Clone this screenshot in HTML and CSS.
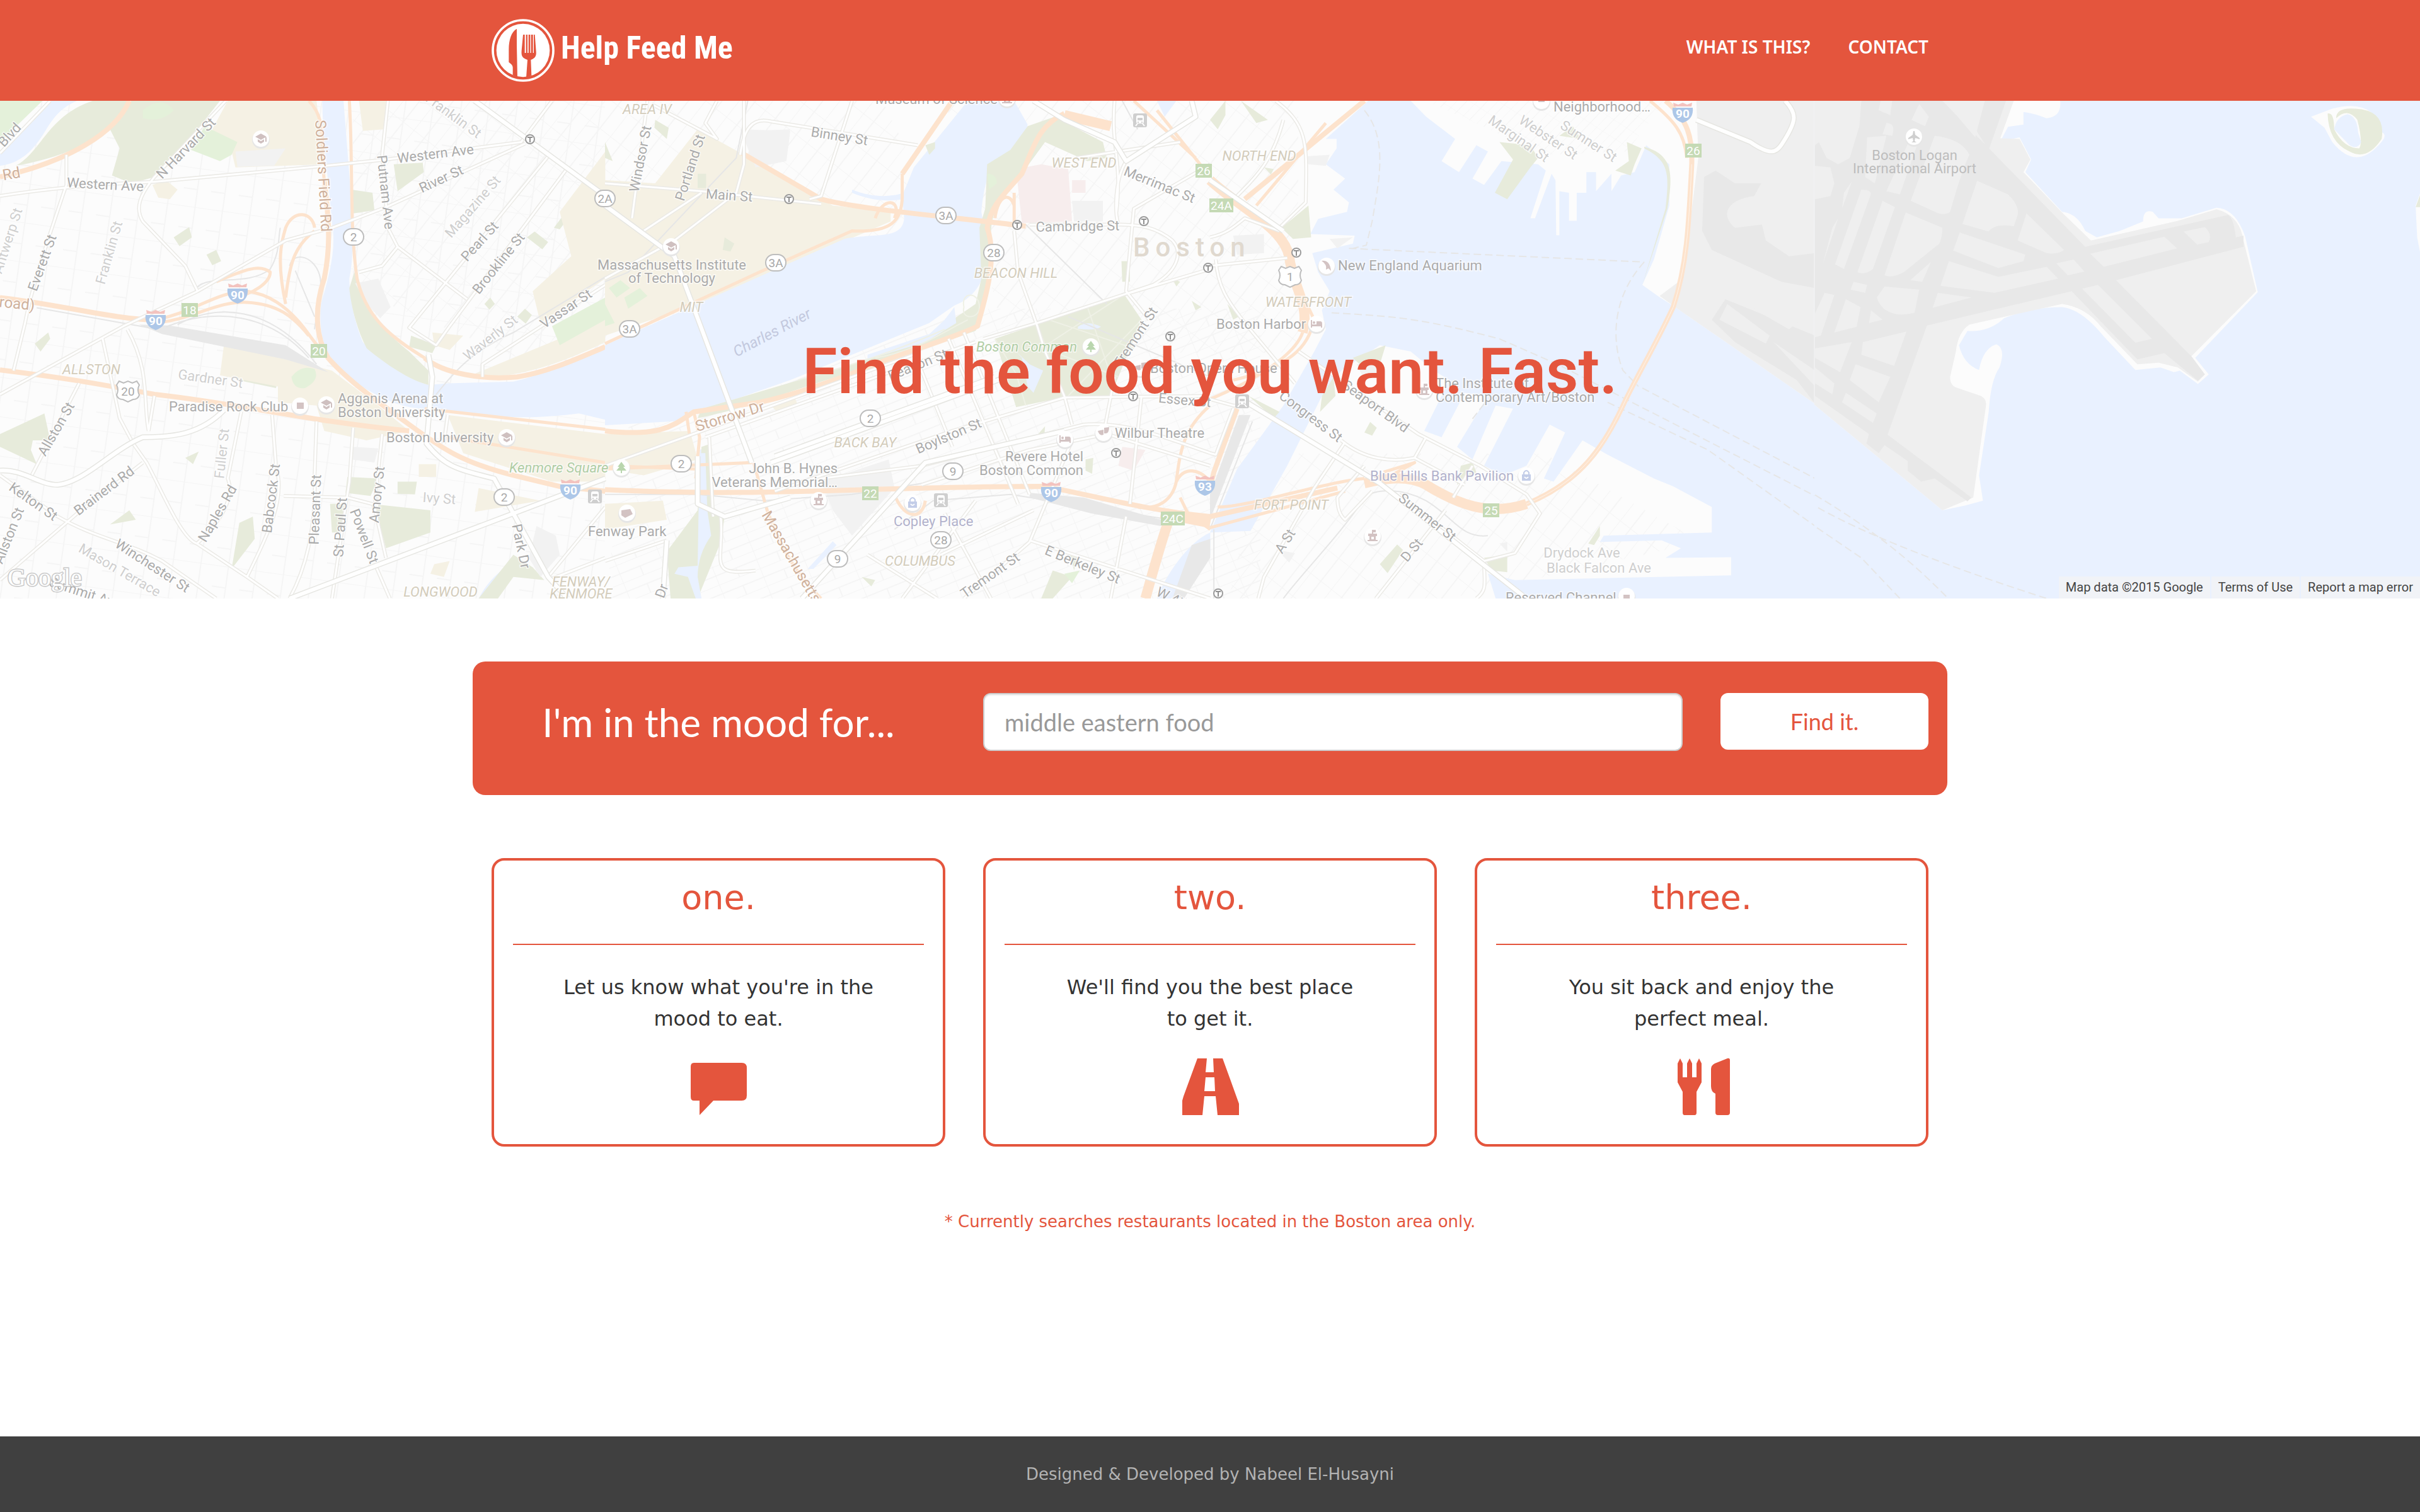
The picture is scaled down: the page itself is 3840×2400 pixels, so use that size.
FILE: index.html
```html
<!DOCTYPE html>
<html lang="en">
<head>
<meta charset="utf-8">
<meta name="viewport" content="width=device-width, initial-scale=1">
<title>Help Feed Me</title>
<link rel="stylesheet" href="styles.css">
</head>
<body>
<header class="site-header">
  <div class="container header-inner">
    <a class="brand" href="#">
      <svg class="brand-mark" viewBox="60 90 300 300" aria-hidden="true">
        <circle cx="210" cy="240" r="144" fill="none" stroke="#fff" stroke-width="11"/>
        <circle cx="210" cy="240" r="127" fill="#fff"/>
        <path fill="#e4553d" d="M179 138C155 150 142 190 142 235V296C150 303 161 308 161 322V357L183 368 180 216V138ZM210 165 203 240C201 266 205 276 231 285L225 368 250 360 247 285C268 277 274 266 272 245L266 165H261V252H257V165H248V252H244V165H236V252H231V165H224V252H218V165Z"/>
      </svg>
      <span class="brand-name">Help Feed Me</span>
    </a>
    <nav class="site-nav">
      <a href="#about">What is this?</a>
      <a href="#contact">Contact</a>
    </nav>
  </div>
</header>

<section class="hero">
  <svg class="map" viewBox="0 0 3840 790" preserveAspectRatio="xMidYMid slice" role="img" aria-label="Map of Boston">
    <defs>
      <pattern id="grid-a" width="44" height="62" patternUnits="userSpaceOnUse" patternTransform="rotate(8)"><path class="street" d="M0 0H44M22 0V62M0 34H22"/></pattern>
      <pattern id="grid-b" width="70" height="30" patternUnits="userSpaceOnUse" patternTransform="rotate(-22)"><path class="street" d="M0 0H70M0 0V30M35 15V30M0 15H70"/></pattern>
      <pattern id="grid-c" width="42" height="46" patternUnits="userSpaceOnUse" patternTransform="rotate(38)"><path class="street" d="M0 0H42M0 0V46M21 0V46"/></pattern>
      <g id="t"><circle r="7" fill="#fff" stroke="#9b9b9b" stroke-width="2"/><path d="M-4-3H4M0-3V5" stroke="#8f8f8f" stroke-width="2"/></g>
      <g id="pin"><circle cy="2" r="14" fill="#e6e6e6"/><circle r="13" fill="#fff"/></g>
      <g id="school"><use href="#pin"/><path fill="#cfc0c0" d="M-9-3 0-8 9-3 0 2ZM-5 1 0 4 5 1V5L0 8-5 5ZM7-2H9V5H7Z"/></g>
      <g id="tree"><use href="#pin"/><path fill="#b9d6ae" d="M0-9 6-1H3L8 5H1V9H-1V5H-8L-3-1H-6Z"/></g>
      <g id="hotel"><use href="#pin"/><path fill="#d3c3c3" d="M-9-6H-7V1H0V-4H6Q9-4 9 0V6H7V4H-7V6H-9Z"/><circle cx="-4" cy="-2" r="2" fill="#d3c3c3"/></g>
      <g id="civic"><use href="#pin"/><path fill="#d3c3c3" d="M-1-10H5V-6H1V-4H7V0H5V6H8V8H-8V6H-5V0H-7V-4H-1ZM-2 1V5H2V1Z"/></g>
      <g id="shop"><use href="#pin"/><path fill="#c3cde8" d="M-7-2H7V8H-7Z"/><path fill="none" stroke="#c3cde8" stroke-width="2" d="M-4-2V-5Q0-11 4-5V-2"/><path fill="none" stroke="#fff" stroke-width="2" d="M-3 2Q0 6 3 2"/></g>
      <g id="masks"><use href="#pin"/><path fill="#d3c3c3" d="M-9-3 0-5V3Q-6 6-9-3ZM1-8 9-9Q9 1 3 1H1Z"/></g>
      <g id="train"><rect x="-11" y="-11" width="22" height="22" rx="3" fill="#cfcfcf"/><rect x="-6" y="-8" width="12" height="13" rx="3" fill="#fff"/><path fill="#cfcfcf" d="M-4-4H4V0H-4ZM-4 2H-2V4H-4ZM2 2H4V4H2Z"/><path d="M-4 5-7 9M4 5 7 9" stroke="#fff" stroke-width="2"/></g>
      <g id="route"><rect x="-16" y="-13" width="32" height="26" rx="13" fill="#fff" stroke="#bdbdbd" stroke-width="2"/></g>
      <g id="us"><path fill="#fff" stroke="#bdbdbd" stroke-width="2" d="M-14-16-7-13 0-16 7-13 14-16 18-10Q14-2 18 6 16 13 8 13L0 17-8 13Q-16 13-18 6-14-2-18-10Z"/></g>
      <g id="interstate"><path fill="#f3c3bf" d="M-15-16-7-13 0-16 7-13 15-16 14-10H-14Z"/><path fill="#adc7e8" d="M-16-8H16Q18 10 0 16-18 10-16-8Z"/></g>
      <g id="exit"><rect x="-13" y="-11" width="26" height="22" fill="#c5dab5"/></g>
      <!-- Road centre lines, stroked twice: casing first, then surface -->
      <path id="r1" class="line" d="M130 0 0 165M585 0 400 240C360 300 350 340 370 380L480 520 512 600M0 300C150 270 300 260 400 255L800 210 1000 185 1350 130 1430 0M172 170V265C120 450 80 600 65 700L35 850M0 925 320 710 512 600 740 440 860 400 1000 335 1360 135M1005 0 990 170 1005 400 1030 460 1210 625M1030 460 990 520 930 540M1420 175 1060 715 1130 770 1165 710 1465 220M1568 580 1250 830V870M265 745 310 1000 345 1080 380 1140C420 1230 470 1380 510 1395L640 1500 720 1568M330 720C390 850 370 950 385 1040M400 930 385 1040M205 890 80 1185M0 1180 150 1310C250 1380 330 1390 420 1450L560 1568M0 1510 200 1300 370 1140M625 980 590 1190C610 1250 570 1330 510 1395M705 990 715 1150C740 1250 700 1350 640 1500M820 1010 815 1180C820 1350 790 1480 750 1568M915 1030 905 1200 860 1568M990 1050 970 1280 1000 1440M735 1245 900 1250 980 1275M1568 1440 1420 1510M1568 1280 1420 1500M975 1470 1010 1568M1160 990 1150 1080"/>
      <path id="r1b" class="line" d="M1230 0 1568 300M0 1165C60 1160 100 1210 150 1210 220 1200 290 1100 370 1060 450 1060 520 1050 580 975M1110 800 1120 870 1105 1080C1150 1150 1180 1160 1280 1190L1330 1300M750 1568 1330 1300 1568 1190M1330 1300 1420 1500 1470 1568"/>
      <path id="r2" class="line" d="M360 0V200L340 290 180 440 0 560M120 10 290 120 260 70 290 0M110 0 70 370M0 260 250 285 560 325M250 290 100 410M350 170C360 90 380 50 430 65L810 140M640 0 560 300 530 310M1060 410 1070 540 1120 710 1140 790 1190 930 1210 1020M980 750 1120 700 1420 580C1480 540 1500 480 1470 440 1430 400 1390 390 1330 390H1100M1320 0C1310 150 1340 180 1325 350M1350 190C1320 250 1320 350 1330 390M1568 200 1370 340 1350 600 1410 690M1360 605 1568 530M890 750 1070 1270M930 730 1100 1240M800 790 900 1090M800 800 0 1150M960 760 260 1060M1568 930 1190 935 900 1040 440 1230M1568 1110C1450 1060 1350 1010 1240 1020L820 1150 560 1190M1568 1150 1300 1050 1100 1100 820 1210M280 1310 270 1060M300 1310C310 1450 260 1500 390 1480M160 1385 0 1450M1100 1390 1210 1070M870 1430 1110 1290M1320 870 1290 1060M1390 930 1360 1270M1100 1385 1568 1568M1100 1390 930 1568M680 1430 860 1568M960 1260 770 1568M1350 1310 1310 1568M880 1300 1000 1568M1220 180 1490 130"/>
      <path id="r2b" class="line" d="M0 330 180 490 380 1140M1110 0 1190 60 1320 130 1350 190 1530 50 1520 0M240 1120V1270L310 1310 480 1250M440 1120 1010 870M430 1140 1040 870M510 1568 830 1140 1190 1040M160 1385 150 1568"/>
      <path id="r3" class="line" d="M170 0C260 80 250 150 248 320L180 400M190 60C160 200 110 250 70 300M0 520 200 495M0 430C40 420 60 400 90 370L180 410M15 500C20 600 60 650 90 700L220 890M0 940 60 960 100 960M230 790 540 1050 700 1150 820 1240 855 1300 790 1425 710 1450M340 1070C400 1130 470 1140 530 1125L660 1210M560 1060 530 1125M350 1075 270 1220M400 1150 330 1250C330 1290 340 1310 350 1320L420 1230M270 1220 140 1500 125 1568M680 1150 630 1250M610 1290 430 1568M490 1240 710 1450C710 1520 720 1540 690 1568M0 1110 15 1115 60 970"/>
      <path id="r3b" class="line" d="M0 250 190 410M95 950 440 1205 820 1568M1260 60 1400 130C1460 180 1470 160 1490 120 1520 60 1520 40 1490 0"/>
    </defs>
    <rect width="3840" height="790" fill="#fcfcfc"/>
    <rect width="960" height="790" fill="url(#grid-a)"/>
    <path fill="url(#grid-c)" d="M560 0H1400L1500 200 900 440 560 300Z"/>
    <path fill="url(#grid-b)" d="M1000 500 1550 330 2000 330V790H960Z"/>
    <path fill="url(#grid-c)" d="M1500 0H2060V400H1600ZM2000 560H2450L2700 700 2300 790H1950ZM2200 0H2650V120H2400Z"/>

    <g transform="scale(.6125 .5038)" class="geo">
      <path class="water" d="M200 0H130L0 165V205C60 195 90 150 120 90 140 50 160 20 200 0ZM835 0C835 100 850 250 862 400 870 480 850 560 832 640 825 720 835 790 880 850 930 900 1000 950 1060 965 1120 975 1200 985 1250 990 1330 1000 1400 1000 1500 985L1568 1005V780C1500 800 1420 860 1330 885L1160 890 1110 895C1040 870 970 800 940 760 915 690 905 600 905 560 925 450 905 250 890 0ZM1240 1568C1270 1500 1300 1480 1330 1450L1320 1480C1290 1510 1290 1540 1270 1568Z"/>
      <path class="park" d="M240 0H330C300 100 200 170 40 205 110 160 120 50 240 0ZM340 0H570L440 200 400 240 340 260 290 235 310 150 285 90ZM918 540 935 600C960 690 1020 750 1060 790L1110 850V895C1060 880 1000 830 950 780 915 700 905 600 905 590ZM0 1050 115 985 130 1070H85L80 1100 95 1145 0 1090ZM960 1270 1115 1290V1360L1000 1410 985 1340ZM615 830 725 850 715 905 615 880ZM900 1185 980 1190 960 1245 895 1235ZM1030 1200H1080L1075 1240 1030 1238ZM450 430 490 398 497 430 465 458ZM535 485 560 470 573 505 550 518ZM1020 200 1095 195 1098 225 1030 285ZM910 280 965 290 970 345 915 355ZM90 765 125 730 130 750 105 790ZM480 1125 515 1105 500 1145ZM285 1335 335 1290 352 1320ZM620 1330 655 1310 660 1380 600 1475ZM855 1270H890L885 1360H860ZM1365 430 1385 412 1420 445 1405 468ZM1435 400 1475 335 1485 350 1450 405ZM1065 740 1130 770 1120 795 1060 775ZM1240 1568 1330 1430 1380 1470 1410 1510 1330 1500 1290 1568ZM1340 680 1360 655 1378 675 1362 702ZM1255 640 1270 620 1282 640 1268 658Z"/>
      <path class="campus" d="M590 0H820L840 200 610 210 600 160 550 90ZM930 0H1000L995 90 940 95ZM1568 160 1450 350 1480 490 1380 600 1400 700 1568 560ZM1230 860 1568 690V760C1400 860 1300 870 1250 870ZM580 770 760 820 860 850 980 960 1060 1040 950 1070 840 1040 820 960 720 950V900L570 865ZM1160 990 1568 1050V1200H1430L1200 1110ZM1240 1220 1400 1260 1230 1295ZM1085 1145H1130V1185H1085ZM1120 730 1200 740 1165 785 1125 770ZM395 265 430 250 460 280 440 310 410 305ZM1125 1460 1165 1450 1150 1500 1115 1490Z"/>
      <path class="lawn" d="M530 80 615 130 600 170 570 190 495 155ZM1430 710 1568 620V690L1450 770ZM755 870Q780 830 815 845 830 880 790 905 760 910 755 870ZM370 30Q420-20 450 30 420 70 370 55ZM0 0H110L0 130Z"/>
      <path class="block" d="M610 160 740 150 710 205 615 208ZM920 575 980 560 1012 650 985 685 950 640ZM915 1090 980 1095 970 1140 910 1130ZM1390 1340 1440 1370 1450 1430 1400 1500 1370 1440Z"/>
      <path class="rail-yard" d="M360 705 440 708 740 770 850 855 740 815 420 735Z"/>
      <path class="rail" d="M95 652 400 718M460 705C560 640 700 640 820 830M430 712C560 650 700 670 800 810M750 520C760 470 820 490 830 560 835 620 815 700 815 720M765 535 815 680M505 600C520 540 640 590 700 530 725 480 720 440 726 400M1568 555 1330 730C1220 790 1180 850 1120 940"/>
      <path class="highway" d="M335 0C300 100 180 190 0 240M800 0C850 60 830 150 840 250M905 0C915 200 905 400 925 560 950 690 1020 750 1100 810M0 620C150 640 300 690 400 690 500 670 560 600 640 600 700 610 740 650 770 690 800 730 810 760 850 810M400 700C500 690 560 630 640 635 720 640 760 680 800 740M740 640C715 500 730 440 740 400 760 340 810 350 815 400M815 410C760 460 750 520 740 620M560 570C620 540 670 510 700 540 700 570 660 610 600 620M1100 970 1568 1035M1160 1060 1568 1140"/>
      <path class="highway wide" d="M335 0C300 100 180 190 0 240M840 250C855 400 855 470 840 560 815 650 815 740 850 810 900 880 980 950 1060 1020 1150 1100 1200 1140 1330 1180L1450 1215 1568 1230M1100 810C1150 860 1250 880 1340 870 1420 855 1500 810 1568 775M0 848C150 870 250 890 400 925 600 950 800 1010 1060 1040M0 620C150 640 300 690 400 690"/>
      <use href="#r1" class="road-edge"/><use href="#r1" class="road"/>
      <use href="#r1b" class="main-edge"/><use href="#r1b" class="main-road"/>
    </g>

    <g transform="translate(960 0) scale(.6125 .5038)" class="geo">
      <path class="campus" d="M0 250 130 260 240 90 360 170 590 330 740 350V380L240 640 0 740ZM0 1050 220 1040 240 1130 100 1180 0 1160ZM0 1270 150 1260 160 1320 0 1350ZM430 960 490 930 500 960 450 985Z"/>
      <path class="block" d="M380 95 480 90 430 200 370 180ZM560 1200 735 1130 750 1220 640 1370 590 1290ZM1210 315H1290V380H1215ZM350 90 480 95 470 190 390 210Z"/>
      <path class="hospital" d="M1065 215 1130 200 1200 215 1210 380 1080 385ZM1210 250H1245V290H1210ZM1340 1090 1400 1100 1370 1165 1330 1150Z"/>
      <path class="water" d="M940 0H1060L1095 75 1080 155C1010 170 985 220 975 350L985 420C1000 560 960 620 905 645L840 700 640 800 480 880 350 935 250 970 180 1010 0 1022V770L240 640 620 435C700 415 770 440 775 370L770 300 800 210ZM640 280C700 310 750 300 775 290L770 310C720 320 680 310 640 290ZM525 1475 590 1388 600 1400 540 1475ZM245 1100 265 1090C280 1200 270 1290 280 1350 290 1420 230 1500 250 1568H170C170 1500 180 1450 240 1440 270 1390 240 1300 245 1100ZM1568 1360C1510 1390 1450 1500 1430 1568H1470C1500 1500 1540 1450 1568 1430ZM1430 0H1480L1450 50Z"/>
      <path class="park" d="M1095 80 1165 50 1290 130 1300 180 1250 190 1140 130 1080 230C1020 300 1000 360 1000 420L1005 540C980 620 975 700 960 725L700 835C500 900 400 960 240 1000L250 970 350 935 640 830 840 740 960 640 975 560 970 400 985 340 990 200 1050 155ZM1010 750 1345 610 1390 690 1310 930 1185 935 1065 965ZM250 1090 275 1080 280 1280 310 1310 300 1390 240 1568H170L160 1420 240 1290ZM130 60 165 85 160 120 128 85ZM240 230H262V275H240ZM310 430 335 450 325 475 305 470ZM830 140 855 130 855 150 840 170ZM1520 630 1545 650 1530 660ZM1338 505H1360V570H1340ZM1470 560 1490 570 1480 585ZM1205 1430 1225 1440 1215 1480ZM1160 1480 1210 1500 1160 1568H1130ZM665 1500 700 1510 690 1530ZM1245 1130 1265 1125 1262 1175 1245 1165ZM1115 1060 1140 1025 1138 1060ZM0 130 20 190 0 180Z"/>
      <path class="lawn" d="M10 590 40 565 65 590 30 620ZM50 620 90 590 110 615 60 655ZM0 640 25 700 0 710ZM990 230Q1015 230 1015 260L995 280ZM1190 1490 1230 1480 1210 1520Z"/>
      <path class="water" d="M1065 790 1080 810 1095 900 1110 920 1135 850 1100 830ZM1225 712Q1250 690 1285 712 1270 725 1225 718ZM680 800 840 735 880 690 905 650 910 700 830 760 680 815ZM245 1110H260L265 1290 275 1370Q240 1430 240 1500L250 1568H235L215 1500 180 1490 190 1470 240 1465Z"/>
      <path class="trail" d="M1010 750 1065 860 1090 960M1120 700 1185 930M1150 690 1370 780M1130 780 1345 610M1200 930 1390 690M1180 800 1330 870M1250 650 1320 900M930 650C920 600 970 600 970 650 970 690 920 690 930 650M700 810C800 790 860 740 940 690M500 880C650 830 750 790 880 720"/>
      <path class="rail" d="M1090 390 1300 640M370 0 340 180 60 540 0 570M1340 0 1380 90M750 1350 850 1260 1050 1240 1568 1340M1200 680 1568 870M0 1240H240L410 1260 640 1240 850 1200"/>
      <path class="rail-yard" d="M1100 1235 1240 1250 1440 1320 1440 1340 1260 1300 1100 1250ZM1520 1400 1568 1380V1440L1500 1568H1470Z"/>
      <path class="highway wide" d="M900 0 770 230M355 165 560 310C650 340 850 360 1090 395M1190 40C1120 80 1110 150 1080 230 1030 300 1000 330 990 400 1020 500 980 640 965 710 900 750 780 790 700 830 600 880 480 930 400 950L230 980C180 1020 150 1060 0 1040M0 1225C400 1250 700 1215 1140 1215 1250 1240 1400 1290 1568 1310M1180 50 1310 80"/>
      <path class="highway huge" d="M1470 1290C1450 1350 1420 1480 1400 1568M1440 1300 1568 1330M1190 45 1310 80"/>
      <path class="highway" d="M770 230V300C770 380 740 415 640 410L400 540 0 765M700 370C720 300 770 310 750 370M385 1140 420 1290C460 1420 500 1500 560 1568M0 1160 380 1140M0 1150 240 1160M1568 960C1500 1030 1490 1100 1480 1200 1470 1260 1430 1290 1380 1280M1430 30 1568 240M1370 0 1530 180M1060 290 1060 390M1010 370C1020 290 1050 290 1060 330M230 980 245 1060 235 1190M210 980 220 1060M750 1240C770 1310 820 1330 830 1260M1480 1200C1500 1150 1540 1160 1568 1200M1490 1250 1510 1300 1568 1350"/>
      <use href="#r2" class="road-edge"/><use href="#r2" class="road"/>
      <use href="#r2b" class="main-edge"/><use href="#r2b" class="main-road"/>
    </g>

    <g transform="translate(1920 0) scale(.6125 .5038)" class="geo">
      <path class="water" d="M410 0 300 120H328V150L300 200 350 245 320 280 360 320 355 350 280 372 260 420 375 425 370 450 265 480 280 540 310 600 290 660 300 720 270 790 190 960 70 1160 0 1360 105 1355 200 1150 290 930 340 850 440 770 520 790 580 850 620 880 555 1040 600 1060 660 920 720 930 640 1090 680 1130 740 960 785 970 710 1150 760 1180 820 1150 880 1020 920 1045 865 1190 890 1200 965 1070 1030 1115 1150 1190 1200 1215 1300 1280V1360L1020 1370 1010 1390 1170 1385 1220 1410 1180 1440 1350 1438V1495L790 1510 720 1490 740 1568H1568V0Z"/>
      <path class="land" d="M520 0 560 50 635 120 600 190 645 225 690 140 720 160 680 245 710 265 755 190 850 200 870 220 830 370 842 370 885 230 895 250 897 424H905V285L930 290V378H950V290L975 290V225H1000V285L1040 230V285L1065 235 1100 225 1130 140 1190 200V330L1150 500 1120 580 1160 615 1205 650 1568 955V0Z"/>
      <path fill="url(#grid-c)" d="M560 0H1180L1080 160 870 170Z"/>
      <path class="airport" d="M1260 0 1265 180 1240 420 1225 560 1165 615 1205 650 1568 955V0Z"/>
      <path class="runway" d="M1280 240 1310 220 1360 260 1428 260 1410 300C1340 310 1320 360 1360 400L1430 390 1440 440 1500 490 1568 480V590L1480 570 1300 470 1275 410ZM1335 625 1568 740V955L1520 880 1360 760 1300 690Z"/>
      <path class="airport" d="M1340 640 1450 740 1440 765 1320 690ZM1460 760 1568 850V900ZM1400 650 1520 700 1568 620V650L1500 720Z"/>
      <path class="park" d="M750 130 830 140 850 180 830 210 770 310 738 290 785 185ZM1080 130 1118 150 1100 200 1090 235 1050 220 1085 190ZM1125 145C1200 170 1200 230 1185 340L1120 580 1180 340C1190 230 1190 190 1125 150ZM215 370 255 330 262 430 215 435 185 400ZM370 810 455 770 440 830 405 850ZM290 930 320 870 325 930 285 980ZM400 1045 415 1012 432 1030 420 1055ZM440 1460 485 1398 500 1415 460 1488ZM710 1440 770 1430V1485L730 1480ZM100 930 180 980 165 1000ZM980 1395 1010 1340V1370L995 1400ZM650 1150 680 1140 690 1170 640 1210ZM0 60 40 0V45L20 90ZM80 0 150 60 120 70ZM940 80 960 120 905 110ZM140 210 165 215 158 232ZM45 640 75 680 60 690Z"/>
      <path class="block" d="M60 425 140 420V480L70 485ZM310 435 370 430 330 465ZM380 830 430 820 440 860 400 880ZM245 175 310 170 300 205 255 200ZM175 1415 220 1425 205 1455ZM750 1395 770 1390 770 1420Z"/>
      <path class="rail" d="M190 1568C230 1500 350 1350 400 1250 430 1220 500 1220 560 1260 630 1310 650 1380 720 1370M110 1010 0 1350M10 1350V1568"/>
      <path class="rail-yard" d="M75 990H105L0 1320V1240Z"/>
      <path class="ferry" d="M400 30C460 120 440 240 420 380L405 455 370 465M360 465 1125 508M1125 508C1040 620 1040 760 1070 850L1110 900M315 668C500 680 560 690 750 750L900 830 1568 1245M1030 950 1290 1100 1568 1340M1120 905 1568 1190M710 955 675 1010"/>
      <path class="highway wide" d="M400 0 90 310M1180 0C1240 60 1250 120 1248 200 1240 400 1235 520 1200 650 1150 780 1100 880 1070 960 1020 1090 960 1200 820 1270M70 970 10 1170 0 1220M0 1310 330 1220"/>
      <path class="highway huge" d="M0 250C80 340 190 400 205 490 215 590 260 640 240 730M820 1270C720 1310 640 1270 560 1210 500 1170 420 1200 400 1205"/>
      <path class="highway" d="M300 70 120 330M1140 0C1200 60 1230 100 1235 180M240 730C220 800 120 880 0 940M270 680C260 780 200 840 60 880M235 600 270 690M400 1190C300 1200 100 1280 20 1280M0 1345 350 1230M450 1170 530 1140 440 1200"/>
      <path class="white-line" d="M1248 200C1240 400 1235 520 1200 650 1150 780 1100 880 1070 960 1020 1090 960 1200 820 1270"/>
      <use href="#r3" class="road-edge"/><use href="#r3" class="road"/>
      <use href="#r3b" class="main-edge"/><use href="#r3b" class="main-road"/>
    </g>

    <g transform="translate(2880 0) scale(.6125 .5038)" class="geo">
      <path class="water" d="M-2 0H1570V1570H-2Z"/>
      <path class="land" d="M-2 0H635Q640 50 600 55 570 40 540 35V75L500 82 480 128 530 115 560 185 545 225 640 350Q680 355 700 410L730 430 790 410 850 380Q850 340 875 350L890 370H950L1040 337Q1090 340 1115 430L1147 603 985 810 1020 862 992 892 945 850 930 855 895 840 830 848 750 745Q690 655 640 650 560 650 490 685 450 730 395 725L373 770Q385 830 425 848 435 780 470 767 495 780 478 840 455 880 450 980L425 1180 435 1260 390 1275 330 1290-2 957ZM1285 50 1340 25Q1450-10 1470 100 1485 110 1460 140 1400 220 1340 130L1320 85ZM1568 290 1556 330 1560 430 1568 480Z"/>
      <path class="airport" d="M-2 0H515L480 118 530 120 558 185 540 225 640 352 715 440 940 378 1040 342Q1100 360 1110 440L1143 600 975 805 1010 862 992 885 940 840 890 825 835 830 740 710Q700 650 640 640L400 705Q370 730 365 790L350 870Q350 900 370 905L430 930Q445 940 443 960L410 1250 330 1290-2 957Z"/>
      <path class="runway" d="M330 0 700 460 1070 360Q1085 370 1090 430L1110 425V460L780 565 975 805 1010 862 992 882 905 795 835 815 665 600 290 708 188 1052 318 1170 405 1250 395 1262 310 1190 275 1200 240 1165V1135L180 1085 165 1110 133 1080 140 1050 0 930V0ZM440 0H495L450 155 400 60Z"/>
      <path class="airport" d="M335 0H440L415 115ZM270 10 295 50 285 80 250 60ZM420 252 500 295Q530 330 525 360L515 395Q465 385 450 412L382 388ZM310 110Q380 120 400 170 380 220 350 350 340 360 320 355L248 315ZM548 355 645 470Q630 485 600 480L525 440ZM375 415 545 485 540 505 475 527 358 472ZM347 505 475 555 600 523 630 560 465 605 325 583ZM625 512 670 500 698 538 655 550ZM713 482 905 428 938 465 748 523ZM955 412 1010 398Q1030 420 1020 445L990 453ZM692 592 733 580 873 750 830 762ZM235 352 330 400Q330 430 322 450L230 540Q200 560 180 550ZM300 508 278 570 247 565ZM175 315 207 335 150 530Q130 550 110 540ZM120 280Q150 280 143 300L75 530 52 515ZM250 110 270 120 220 295 185 285ZM135 115 185 110 155 260 130 240ZM180 585 270 595 258 668Q180 690 160 620ZM318 605 405 620 305 652ZM100 570 135 580 130 605 92 595ZM80 625 118 650 108 712 50 730ZM25 605 50 612 15 740 0 745V670ZM145 660 175 690 140 700ZM124 760 237 727 205 835 120 800ZM105 830 195 870 165 950 90 880ZM80 920 160 985 150 1015 70 950ZM95 760 65 855 0 810V780ZM0 0H120L115 80 90 180 60 200 30 180 10 130 0 140ZM0 205 40 210 50 260 40 300 0 310ZM95 255 70 340 75 290ZM60 370 20 515 45 400ZM0 840 50 890 45 925 0 890ZM170 0H200L195 45 165 30ZM185 70Q210 70 200 110L175 105Z"/>
      <path class="park" d="M1328 40Q1345 35 1345 90 1370 150 1410 150 1420 130 1405 60 1380 20 1350 55 1350 20 1400 25 1480 30 1468 120 1430 190 1385 160 1330 130 1328 40ZM1568 295 1556 335H1568Z"/>
      <path class="water" d="M1380 42Q1405 50 1407 100L1415 130Q1405 155 1385 140L1345 90Q1350 50 1380 42Z"/>
      <path class="ferry" d="M0 1242C150 1350 250 1450 345 1568M8 1282C150 1380 400 1490 600 1568M5 1345 120 1440 220 1568"/>
    </g>

    <g class="marks">
      <use href="#t" x="841" y="61"/><use href="#t" x="1252" y="156"/><use href="#t" x="1614" y="197"/><use href="#t" x="1815" y="191"/><use href="#t" x="1857" y="374"/><use href="#t" x="1798" y="469"/><use href="#t" x="1771" y="559"/><use href="#t" x="1917" y="265"/><use href="#t" x="2057" y="241"/><use href="#t" x="1933" y="782"/>
      <use href="#school" x="414" y="60"/><use href="#school" x="518" y="482"/><use href="#school" x="804" y="534"/><use href="#school" x="1065" y="231"/>
      <use href="#tree" x="986" y="582"/><use href="#tree" x="1731" y="390"/>
      <use href="#hotel" x="1690" y="537"/><use href="#hotel" x="2089" y="354"/>
      <use href="#civic" x="1299" y="634"/><use href="#civic" x="2178" y="691"/><use href="#civic" x="2260" y="459"/><use href="#civic" x="1598" y="-4"/>
      <use href="#shop" x="1448" y="638"/><use href="#shop" x="2422" y="595"/>
      <use href="#masks" x="1751" y="527"/><use href="#masks" x="1810" y="424"/>
      <use href="#train" x="944" y="628"/><use href="#train" x="1493" y="634"/><use href="#train" x="1809" y="31"/><use href="#train" x="1971" y="477"/>
      <use href="#pin" x="476" y="484"/><path fill="#d3c3c3" d="M471 479H482V489H471Z"/>
      <use href="#pin" x="2446" y="0"/><path fill="#d3c3c3" d="M2441-5H2451V2H2441Z"/>
      <use href="#pin" x="2581" y="786"/><path fill="#d3c3c3" d="M2576 784H2586V790H2576Z"/>
      <use href="#pin" x="995" y="654"/><path fill="#d3c3c3" d="M986 650 1000 648 1004 656 992 662 986 658Z"/>
      <use href="#pin" x="2105" y="262"/><path fill="#d3c3c3" d="M2097 254Q2110 252 2112 270L2108 266 2104 268Q2106 260 2097 254Z"/>
      <use href="#pin" x="3037" y="57"/><path fill="#cfcfcf" d="M3036 48H3038L3039 54 3046 59V61L3039 59 3038 64 3041 66H3033L3036 64 3035 59 3028 61V59L3035 54Z"/>
      <use href="#route" x="561" y="216"/><use href="#route" x="960" y="155"/><use href="#route" x="800" y="629"/><use href="#route" x="1381" y="504"/><use href="#route" x="1081" y="576"/><use href="#route" x="1501" y="182"/><use href="#route" x="1231" y="257"/><use href="#route" x="999" y="362"/><use href="#route" x="1577" y="241"/><use href="#route" x="1493" y="697"/><use href="#route" x="1512" y="588"/><use href="#route" x="1329" y="727"/>
      <use href="#us" x="203" y="461"/><use href="#us" x="2047" y="279"/>
      <use href="#interstate" x="377" y="306"/><use href="#interstate" x="247" y="348"/><use href="#interstate" x="905" y="617"/><use href="#interstate" x="1668" y="621"/><use href="#interstate" x="1912" y="611"/><use href="#interstate" x="2670" y="19"/>
      <use href="#exit" x="301" y="332"/><use href="#exit" x="506" y="397"/><use href="#exit" x="1381" y="623"/><use href="#exit" x="1910" y="111"/><use href="#exit" x="2366" y="650"/><use href="#exit" x="2687" y="79"/>
      <path fill="#c5dab5" d="M1842 652H1880V674H1842ZM1919 155H1957V177H1919Z"/>
    </g>
    <g class="shield-text">
      <text x="561" y="223">2</text><text x="960" y="162">2A</text><text x="800" y="636">2</text><text x="1381" y="511">2</text><text x="1081" y="583">2</text><text x="1501" y="189">3A</text><text x="1231" y="264">3A</text><text x="999" y="369">3A</text><text x="1577" y="248">28</text><text x="1493" y="704">28</text><text x="1512" y="595">9</text><text x="1329" y="734">9</text><text x="203" y="468">20</text><text x="2047" y="286">1</text>
    </g>
    <g class="shield-text sign">
      <text x="301" y="339">18</text><text x="506" y="404">20</text><text x="1381" y="630">22</text><text x="1910" y="118">26</text><text x="2366" y="657">25</text><text x="2687" y="86">26</text><text x="1861" y="670">24C</text><text x="1938" y="173">24A</text>
    </g>
    <g class="shield-text sign bold">
      <text x="377" y="315">90</text><text x="247" y="356">90</text><text x="905" y="625">90</text><text x="1668" y="629">90</text><text x="1912" y="619">93</text><text x="2670" y="27">90</text>
    </g>

    <g class="labels mid">
      <text transform="translate(15 54) rotate(-47)">Blvd</text>
      <text transform="translate(295 75) rotate(-46)">N Harvard St</text>
      <text transform="translate(167 133) rotate(3)">Western Ave</text>
      <text transform="translate(612 145) rotate(84)">Putnam Ave</text>
      <text transform="translate(691 84) rotate(-7)">Western Ave</text>
      <text transform="translate(700 124) rotate(-25)">River St</text>
      <text transform="translate(761 223) rotate(-48)">Pearl St</text>
      <text transform="translate(791 258) rotate(-51)">Brookline St</text>
      <text transform="translate(67 257) rotate(-70)">Everett St</text>
      <text transform="translate(89 521) rotate(-60)">Allston St</text>
      <text transform="translate(898 330) rotate(-34)">Vassar St</text>
      <text transform="translate(598 625) rotate(-84)">Amory St</text>
      <text transform="translate(345 655) rotate(-60)">Naples Rd</text>
      <text transform="translate(430 631) rotate(-83)">Babcock St</text>
      <text transform="translate(500 649) rotate(-88)">Pleasant St</text>
      <text transform="translate(540 677) rotate(-86)">St Paul St</text>
      <text transform="translate(578 691) rotate(69)">Powell St</text>
      <text transform="translate(53 636) rotate(35)">Kelton St</text>
      <text transform="translate(165 619) rotate(-37)">Brainerd Rd</text>
      <text transform="translate(242 738) rotate(33)">Winchester St</text>
      <text transform="translate(135 781) rotate(18)">Summit Ave</text>
      <text transform="translate(14 690) rotate(-68)">Allston St</text>
      <text transform="translate(827 707) rotate(78)">Park Dr</text>
      <text transform="translate(1016 92) rotate(-79)">Windsor St</text>
      <text transform="translate(1095 106) rotate(-72)">Portland St</text>
      <text transform="translate(1332 56) rotate(9)">Binney St</text>
      <text transform="translate(1157 150) rotate(4)">Main St</text>
      <text transform="translate(1840 133) rotate(22)">Merrimac St</text>
      <text transform="translate(1710 199) rotate(-1)">Cambridge St</text>
      <text transform="translate(1802 375) rotate(-57)">Tremont St</text>
      <text transform="translate(1880 475) rotate(5)">Essex St</text>
      <text transform="translate(1456 419) rotate(-22)">Beacon St</text>
      <text transform="translate(1505 532) rotate(-23)">Boylston St</text>
      <text transform="translate(1571 753) rotate(-35)">Tremont St</text>
      <text transform="translate(1718 736) rotate(22)">E Berkeley St</text>
      <text transform="translate(1050 778) rotate(-70)">Dr</text>
      <text transform="translate(1862 790) rotate(25)">W 4th</text>
      <text transform="translate(2183 485) rotate(36)">Seaport Blvd</text>
      <text transform="translate(2080 501) rotate(37)">Congress St</text>
      <text transform="translate(2265 661) rotate(38)">Summer St</text>
      <text transform="translate(2039 699) rotate(-57)">A St</text>
      <text transform="translate(2240 713) rotate(-50)">D St</text>
    </g>
    <g class="labels mid lite">
      <text transform="translate(720 24) rotate(36)">Franklin St</text>
      <text transform="translate(750 168) rotate(-49)">Magazine St</text>
      <text transform="translate(173 241) rotate(-74)">Franklin St</text>
      <text transform="translate(12 222) rotate(-72)">Antwerp St</text>
      <text transform="translate(334 441) rotate(8)">Gardner St</text>
      <text transform="translate(778 376) rotate(-38)">Waverly St</text>
      <text transform="translate(697 631) rotate(4)">Ivy St</text>
      <text transform="translate(352 560) rotate(-84)">Fuller St</text>
      <text transform="translate(190 745) rotate(30)">Mason Terrace</text>
      <text transform="translate(2457 58) rotate(34)">Webster St</text>
      <text transform="translate(2410 60) rotate(35)">Marginal St</text>
      <text transform="translate(2521 64) rotate(33)">Sumner St</text>
      <text x="2510" y="717">Drydock Ave</text>
      <text x="2537" y="741">Black Falcon Ave</text>
    </g>
    <g class="labels mid brown">
      <text transform="translate(18 116) rotate(-10)">Rd</text>
      <text transform="translate(513 119) rotate(87)">Soldiers Field Rd</text>
      <text transform="translate(27 322) rotate(6)">road)</text>
      <text transform="translate(1158 501) rotate(-17)">Storrow Dr</text>
      <text transform="translate(1256 724) rotate(60)">Massachusetts</text>
    </g>
    <g class="labels mid area">
      <text x="145" y="426">ALLSTON</text><text x="699" y="779">LONGWOOD</text><text x="922" y="763">FENWAY/</text><text x="922" y="782">KENMORE</text><text x="1027" y="13">AREA IV</text><text x="1720" y="98">WEST END</text><text x="1612" y="273">BEACON HILL</text><text x="1097" y="327">MIT</text><text x="1373" y="542">BACK BAY</text><text x="1460" y="730">COLUMBUS</text><text x="1998" y="87">NORTH END</text><text x="2076" y="319">WATERFRONT</text><text x="2049" y="641">FORT POINT</text>
    </g>
    <text class="river" transform="translate(1225 368) rotate(-28)">Charles River</text>
    <text class="city" x="1798" y="247">Boston</text>
    <g class="labels mid">
      <text x="1066" y="260">Massachusetts Institute</text><text x="1066" y="281">of Technology</text>
    </g>
    <g class="labels mid faint">
      <text x="3038" y="86">Boston Logan</text><text x="3038" y="107">International Airport</text>
    </g>
    <g class="labels">
      <text x="268" y="485">Paradise Rock Club</text><text x="536" y="472">Agganis Arena at</text><text x="536" y="494">Boston University</text><text x="613" y="534">Boston University</text><text x="933" y="683">Fenway Park</text><text x="1389" y="-3">Museum of Science</text><text x="1825" y="424">Boston Opera House</text><text x="1769" y="527">Wilbur Theatre</text><text x="2123" y="261">New England Aquarium</text><text x="1930" y="354">Boston Harbor</text><text x="2278" y="448">The Institute of</text><text x="2278" y="470">Contemporary Art/Boston</text><text x="2389" y="788">Reserved Channel</text><text x="2465" y="9">Neighborhood…</text>
    </g>
    <g class="labels end">
      <text x="1329" y="583">John B. Hynes</text><text x="1329" y="605">Veterans Memorial…</text><text x="1719" y="564">Revere Hotel</text><text x="1719" y="586">Boston Common</text>
    </g>
    <g class="labels violet"><text x="1418" y="667">Copley Place</text><text x="2174" y="595">Blue Hills Bank Pavilion</text></g>
    <g class="labels green"><text x="808" y="582">Kenmore Square</text><text x="1549" y="390">Boston Common</text></g>
    <text class="watermark" x="12" y="770">Google</text>
  </svg>
  <h1 class="hero-title">Find the food you want. Fast.</h1>
  <div class="map-credits">
    <span>Map data ©2015 Google</span>
    <a href="#terms">Terms of Use</a>
    <a href="#report">Report a map error</a>
  </div>
</section>

<main class="container">
  <form class="search" action="#">
    <label class="search-label" for="mood">I'm in the mood for...</label>
    <input class="search-input" id="mood" type="text" placeholder="middle eastern food">
    <button class="search-button" type="submit">Find it.</button>
  </form>

  <div class="steps">
    <section class="step">
      <h2>one.</h2>
      <p>Let us know what you're in the mood to eat.</p>
      <svg class="step-icon" viewBox="0 0 90 90" aria-hidden="true"><path d="M6 7H82Q90 7 90 15V59Q90 67 82 67H37L15 90V67H6Q1 67 1 61V13Q1 7 6 7Z"/></svg>
    </section>
    <section class="step">
      <h2>two.</h2>
      <p>We'll find you the best place to get it.</p>
      <svg class="step-icon" viewBox="0 0 90 90" aria-hidden="true"><path fill-rule="evenodd" d="M25 0H40L38 22H51L50 0H65L77 33 91 72V90H57L54 60H36L33 90H1V67L3 60ZM38 30 36 52H53L52 30Z"/></svg>
    </section>
    <section class="step">
      <h2>three.</h2>
      <p>You sit back and enjoy the perfect meal.</p>
      <svg class="step-icon" viewBox="0 0 90 90" aria-hidden="true"><path d="M11 0 15 8V30H22V8L26 0 30 8V30H37V8L41 0 45 8V38L37 53V86Q37 90 34 90H18Q15 90 15 86V53L7 38V8ZM60 17Q60 11 66 8L86 0Q90-1 90 3V86Q90 90 86 90H71Q67 90 67 86V56Q60 53 60 44Z"/></svg>
    </section>
  </div>

  <p class="note">* Currently searches restaurants located in the Boston area only.</p>
</main>

<footer class="site-footer">Designed &amp; Developed by Nabeel El-Husayni</footer>
</body>
</html>
```
FILE: styles.css
```css
* { box-sizing: border-box; }

body {
  margin: 0;
  min-height: 100vh;
  display: flex;
  flex-direction: column;
  background: #fff;
  color: #333;
  font: 32px/50px Verdana, "DejaVu Sans", sans-serif;
}

a { color: inherit; text-decoration: none; }

.container { width: 100%; max-width: 2340px; margin: 0 auto; }

/* Header */
.site-header { background: #e4553d; color: #fff; }
.header-inner { display: flex; align-items: flex-start; justify-content: space-between; height: 160px; padding: 30px 30px 0; }
.brand { display: flex; align-items: center; gap: 10px; }
.brand-mark { width: 100px; height: 100px; }
.brand-name { font: bold 50px/92px "Roboto Condensed", "Open Sans Condensed", Roboto, sans-serif; padding-bottom: 8px; white-space: nowrap; }
.site-nav { display: flex; gap: 60px; padding-top: 24px; font: 600 28px/40px "Noto Sans", sans-serif; text-transform: uppercase; }

/* Map banner */
.hero { position: relative; height: 790px; overflow: hidden; display: flex; align-items: center; justify-content: center; background: #e9f1ff; }
.map { position: absolute; top: 0; left: 0; width: 100%; height: 100%; }
.hero-title { position: relative; margin: 0; padding-top: 70px; color: #e4553d; font: 600 100px/110px Roboto, sans-serif; text-align: center; }
.map-credits { position: absolute; right: 0; bottom: 0; display: flex; gap: 2px; font: 20px/35px Roboto, sans-serif; color: #444; }
.map-credits > * { padding: 0 11px; background: #f1f3f7; }

.geo path, .line { vector-effect: non-scaling-stroke; }
.street { fill: none; stroke: #f5f5f5; stroke-width: 2; }
.land { fill: #fcfcfc; }
.water { fill: #e9f1ff; }
.park { fill: #e7ebdb; }
.lawn { fill: #e4f1da; }
.campus { fill: #f5f1e4; }
.block { fill: #f2f2f2; }
.hospital { fill: #f7eded; }
.airport { fill: #efefef; }
.runway, .rail-yard { fill: #e8e8e8; }
.rail { fill: none; stroke: #e6e6e6; stroke-width: 2; }
.trail { fill: none; stroke: #eff1e6; stroke-width: 2; }
.ferry { fill: none; stroke: #e6e6e6; stroke-width: 2; stroke-dasharray: 12 6; }
.highway { fill: none; stroke: #fde3cd; stroke-width: 5; stroke-linejoin: round; }
.highway.wide { stroke-width: 8; }
.highway.huge { stroke-width: 16; }
.white-line { fill: none; stroke: #fff4ea; stroke-width: 1; }
.road-edge, .main-edge, .road, .main-road { fill: none; stroke-linejoin: round; }
.road-edge { stroke: #ebeae6; stroke-width: 6; }
.main-edge { stroke: #e6e6e2; stroke-width: 9; }
.road { stroke: #fff; stroke-width: 3; }
.main-road { stroke: #fff; stroke-width: 6; }

.labels text, .river { dominant-baseline: central; }
.labels { font: 22px Roboto, sans-serif; fill: #ababab; stroke: #fff; stroke-width: 3; stroke-opacity: .7; paint-order: stroke; }
.mid { text-anchor: middle; }
.end { text-anchor: end; }
.lite { fill: #cfcfcf; }
.faint { fill: #bdbdbd; stroke: none; }
.brown { fill: #cfb19c; font-size: 24px; }
.area { fill: #d3ccbb; font-style: italic; }
.violet { fill: #b2b2cc; }
.green { fill: #b0cda5; font-style: italic; }
.river { font: italic 24px Roboto, sans-serif; fill: #c3c9de; text-anchor: middle; }
.city { font: 500 42px Roboto, sans-serif; letter-spacing: 9px; fill: #e0d9cf; }
.watermark { font: 40px "Liberation Serif", serif; fill: #fff; stroke: #c8c8c8; stroke-width: 3; paint-order: stroke; }
.shield-text { font: 19px Roboto, sans-serif; fill: #a8a8a8; text-anchor: middle; }
.shield-text.sign { fill: #fff; }
.shield-text.bold { font-weight: 700; }

/* Search */
.search { display: grid; grid-template-columns: 750fr 1110fr 330fr; column-gap: 60px; align-items: start; margin-top: 100px; padding: 50px 30px 70px 0; border-radius: 20px; background: #e4553d; }
.search-label { margin-right: -30px; color: #fff; font: 62px/92px Lato, sans-serif; text-align: center; }
.search-input { width: 100%; height: 92px; padding: 0 32px; border: 2px solid #ccc; border-radius: 12px; background: #fff; box-shadow: inset 0 2px 2px rgba(0, 0, 0, .08); color: #555; font: 38px/50px Lato, sans-serif; }
.search-input::placeholder { color: #999; opacity: 1; }
.search-button { height: 90px; border: 0; border-radius: 12px; background: #fff; color: #e4553d; font: 36px/50px Lato, sans-serif; }

/* Steps */
.steps { display: grid; grid-template-columns: repeat(3, 1fr); gap: 60px; margin-top: 100px; padding: 0 30px; }
.step { padding: 24px 30px 46px; border: 4px solid #e4553d; border-radius: 20px; text-align: center; }
.step h2 { margin: 0 0 42px; padding-bottom: 38px; border-bottom: 2px solid #e4553d; color: #e4553d; font-size: 54px; line-height: 70px; font-weight: 400; }
.step p { max-width: 496px; margin: 0 auto 38px; }
.step-icon { display: block; width: 90px; height: 90px; margin: 0 auto; fill: #e4553d; overflow: visible; }

.note { margin: 94px 0 0; color: #e4553d; font-size: 26px; line-height: 50px; text-align: center; }

.site-footer { margin-top: auto; background: #404040; color: #b3b3b3; font-size: 26px; line-height: 120px; text-align: center; }
```
